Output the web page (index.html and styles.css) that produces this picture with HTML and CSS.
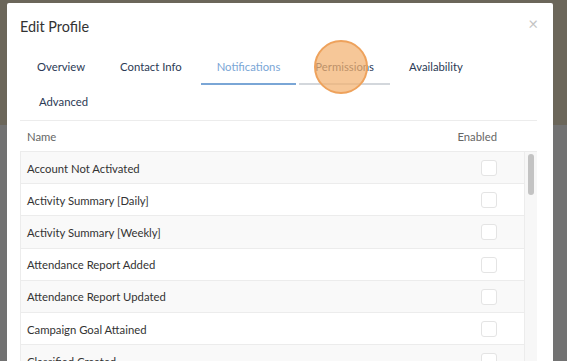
FILE: index.html
```html
<!DOCTYPE html>
<html lang="en">
<head>
  <meta charset="UTF-8" />
  <meta name="viewport" content="width=device-width, initial-scale=1.0"/>
  <title>Edit Profile</title>
  <link rel="stylesheet" href="styles.css">
</head>
<body>
  <!-- page behind the modal -->
  <div class="page">
    <div class="page-top"></div>
    <div class="page-rest"></div>
  </div>

  <div class="modal">
    <div class="modal-header">
      <h2>Edit Profile</h2>
      <span class="close">&times;</span>
    </div>

    <!-- Tabs -->
    <ul class="tabs">
      <li class="tab">Overview</li>
      <li class="tab">Contact Info</li>
      <li class="tab active">Notifications</li>
      <li class="tab hover">Permissions<span class="cursor"></span></li>
      <li class="tab">Availability</li>
      <li class="tab advanced">Advanced</li>
    </ul>

    <!-- Notifications table -->
    <div class="table-head">
      <span>Name</span>
      <span>Enabled</span>
    </div>
    <div class="table-body">
      <div class="rows">
        <div class="row"><span>Account Not Activated</span><span class="check"></span></div>
        <div class="row"><span>Activity Summary [Daily]</span><span class="check"></span></div>
        <div class="row"><span>Activity Summary [Weekly]</span><span class="check"></span></div>
        <div class="row"><span>Attendance Report Added</span><span class="check"></span></div>
        <div class="row"><span>Attendance Report Updated</span><span class="check"></span></div>
        <div class="row"><span>Campaign Goal Attained</span><span class="check"></span></div>
        <div class="row"><span>Classified Created</span><span class="check"></span></div>
        <div class="row"><span>Classified Updated</span><span class="check"></span></div>
      </div>
      <div class="scrollbar"><div class="thumb"></div></div>
    </div>
  </div>
</body>
</html>
```

FILE: styles.css
```css
body {
  margin: 0;
  font-family: Lato, "Open Sans", Arial, sans-serif;
  background-color: #727272;
  overflow: hidden;
}

.page-top {
  height: 125px;
  background-color: #6b665a;
}

.page-rest {
  height: 236px;
  background-color: #727272;
}

.modal {
  position: fixed;
  top: 3px;
  left: 7px;
  box-sizing: border-box;
  width: 546px;
  height: 420px;
  padding: 0 16px 0 13px;
  background: white;
  border-radius: 2px;
}

.modal-header {
  display: flex;
  justify-content: space-between;
  align-items: center;
  height: 47px;
}

h2 {
  margin: 0;
  font-size: 14.4px;
  font-weight: normal;
  color: #333;
}

.close {
  font-size: 17px;
  color: #c4c4c4;
  margin-right: -1px;
  margin-top: -6px;
}

.tabs {
  display: flex;
  flex-wrap: wrap;
  list-style: none;
  margin: 0;
  padding: 0 0 0 1px;
  border-bottom: 1px solid #ececec;
}

.tab {
  position: relative;
  padding: 8px 16px 7px;
  margin-right: 3px;
  line-height: 18px;
  font-size: 11.3px;
  color: #2b3a55;
  border-bottom: 2px solid transparent;
}

.tab.advanced {
  padding-left: 18px;
}

.tab.active {
  color: #7aa6d6;
  border-bottom-color: #7aa6d6;
}

.tab.hover {
  border-bottom-color: #d3d7dc;
}

/* click marker over the Permissions tab */
.cursor {
  position: absolute;
  left: 15px;
  top: -10px;
  width: 50px;
  height: 50px;
  border: 2px solid #eea25c;
  border-radius: 50%;
  background-color: rgba(243, 178, 112, 0.72);
}

.table-head {
  display: flex;
  justify-content: space-between;
  align-items: center;
  height: 30px;
  padding: 0 40px 0 7px;
  font-size: 11.3px;
  color: #666;
  border-bottom: 1px solid #ececec;
}

.table-body {
  display: flex;
  height: 260px;
  overflow: hidden;
}

.rows {
  flex: 1;
  border-left: 1px solid #ececec;
  border-right: 1px solid #ececec;
}

.scrollbar {
  width: 12px;
  background-color: #f7f7f7;
  padding: 2px 3px 0;
  box-sizing: border-box;
}

.thumb {
  height: 41px;
  background-color: #c3c3c3;
  border-radius: 3px;
}

.row {
  display: flex;
  justify-content: space-between;
  align-items: center;
  box-sizing: border-box;
  height: 32.2px;
  padding: 1px 27px 0 6px;
  font-size: 11.3px;
  color: #333;
  border-bottom: 1px solid #ececec;
}

.row:nth-child(odd) {
  background-color: #f9f9f9;
}

.check {
  width: 14px;
  height: 14px;
  border: 1px solid #e4e4e4;
  border-radius: 3px;
  background: white;
}
```
